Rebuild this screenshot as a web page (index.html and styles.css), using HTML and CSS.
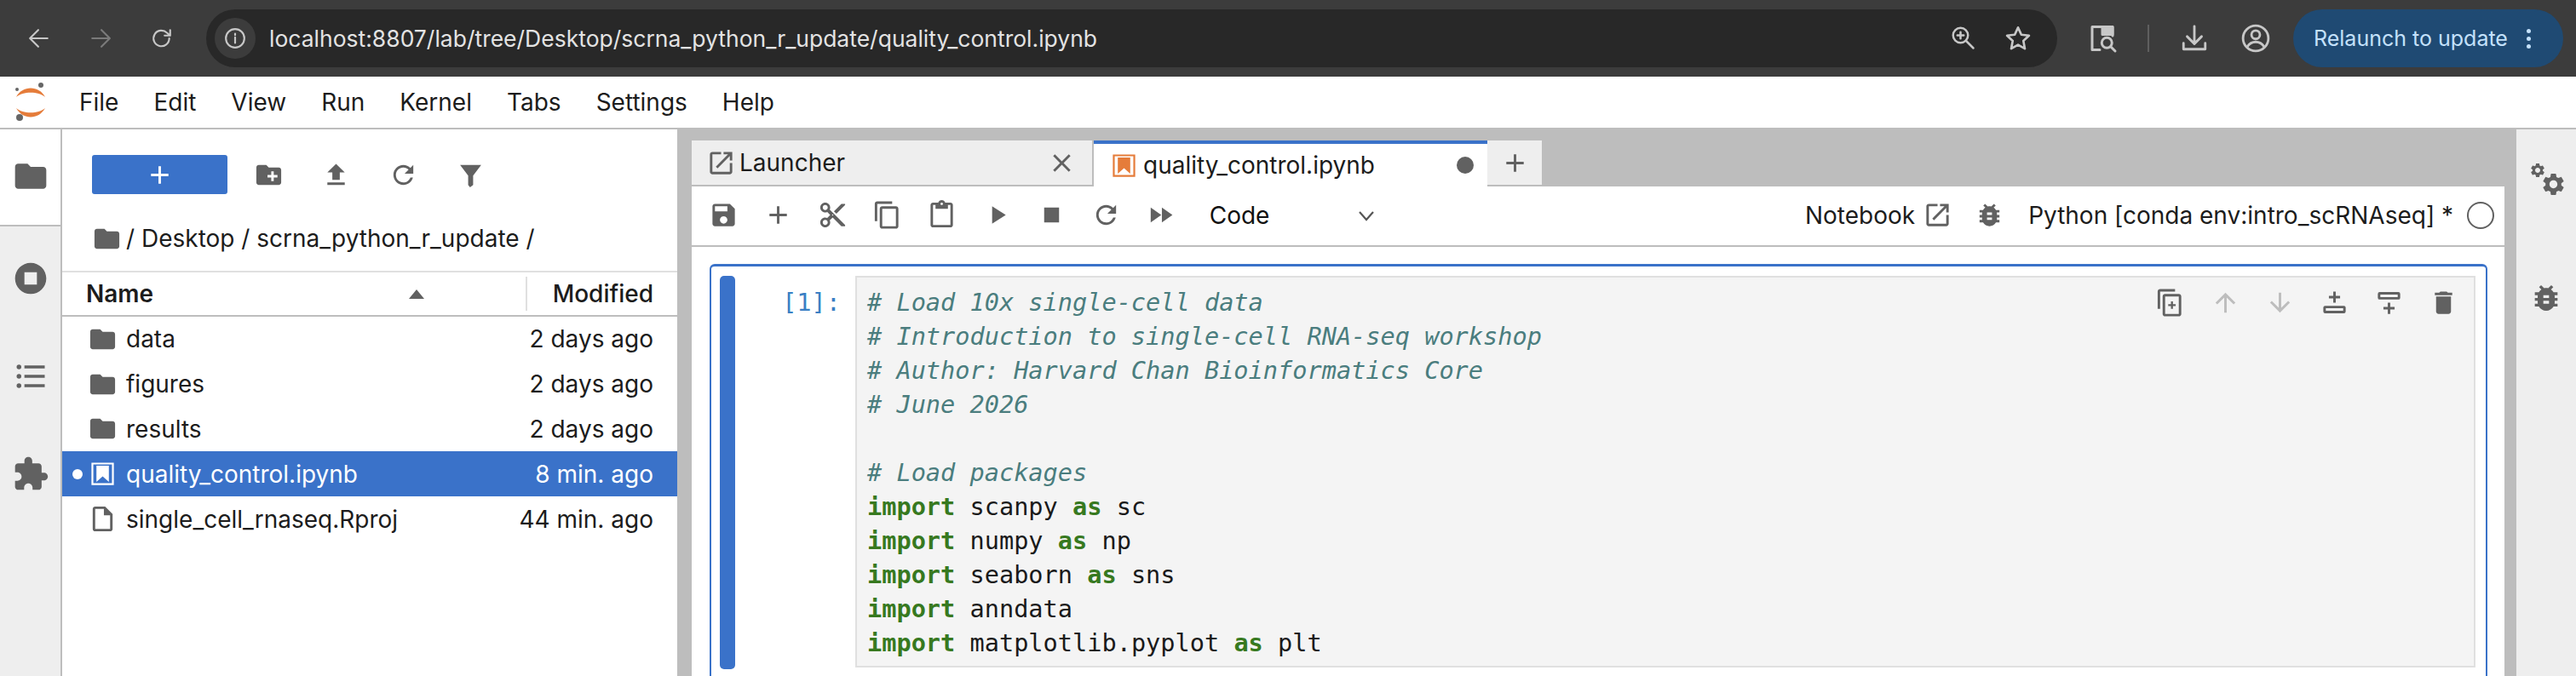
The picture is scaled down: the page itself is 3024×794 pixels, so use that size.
FILE: index.html
```html
<!DOCTYPE html>
<html lang="en">
<head>
<meta charset="utf-8">
<title>quality_control.ipynb - JupyterLab</title>
<link rel="stylesheet" href="styles.css">
</head>
<body>
<svg class="defs" width="0" height="0" aria-hidden="true">
  <symbol id="i-folder" viewBox="0 0 24 24"><path d="M10 4H4c-1.1 0-1.99.9-1.99 2L2 18c0 1.1.9 2 2 2h16c1.1 0 2-.9 2-2V8c0-1.1-.9-2-2-2h-8l-2-2z"/></symbol>
  <symbol id="i-newfolder" viewBox="0 0 24 24"><path d="M20 6h-8l-2-2H4c-1.11 0-1.99.89-1.99 2L2 18c0 1.11.89 2 2 2h16c1.11 0 2-.89 2-2V8c0-1.11-.89-2-2-2zm-1 8h-3v3h-2v-3h-3v-2h3V9h2v3h3v2z"/></symbol>
  <symbol id="i-upload" viewBox="0 0 24 24"><path d="M9 16h6v-6h4l-7-7-7 7h4v6zm-4 2h14v2H5v-2z"/></symbol>
  <symbol id="i-refresh" viewBox="0 0 24 24"><path d="M17.65 6.35C16.2 4.9 14.21 4 12 4c-4.42 0-7.99 3.58-7.99 8s3.57 8 7.99 8c3.73 0 6.84-2.55 7.73-6h-2.08c-.82 2.33-3.04 4-5.65 4-3.31 0-6-2.69-6-6s2.69-6 6-6c1.66 0 3.14.69 4.22 1.78L13 11h7V4l-2.35 2.35z"/></symbol>
  <symbol id="i-filter" viewBox="0 0 24 24"><path d="M3.5 4h17L14 12.5V20l-2.5 2-1.5-2v-7.5z"/></symbol>
  <symbol id="i-stopc" viewBox="0 0 24 24"><path d="M12 2C6.48 2 2 6.48 2 12s4.48 10 10 10 10-4.48 10-10S17.52 2 12 2zm4 14H8V8h8v8z"/></symbol>
  <symbol id="i-list" viewBox="0 0 24 24"><path d="M8 5h13v2H8zM8 11h13v2H8zM8 17h13v2H8z"/><circle cx="4.5" cy="6" r="1.5"/><circle cx="4.5" cy="12" r="1.5"/><circle cx="4.5" cy="18" r="1.5"/></symbol>
  <symbol id="i-puzzle" viewBox="0 0 24 24"><path d="M20.5 11H19V7c0-1.1-.9-2-2-2h-4V3.5C13 2.12 11.88 1 10.5 1S8 2.12 8 3.5V5H4c-1.1 0-1.99.9-1.99 2v3.8H3.5c1.49 0 2.7 1.21 2.7 2.7s-1.21 2.7-2.7 2.7H2V20c0 1.1.9 2 2 2h3.8v-1.5c0-1.49 1.21-2.7 2.7-2.7 1.49 0 2.7 1.21 2.7 2.7V22H17c1.1 0 2-.9 2-2v-4h1.5c1.38 0 2.5-1.12 2.5-2.5S21.88 11 20.5 11z"/></symbol>
  <symbol id="i-file" viewBox="0 0 24 24"><path d="M14 2H6c-1.1 0-1.99.9-1.99 2L4 20c0 1.1.89 2 1.99 2H18c1.1 0 2-.9 2-2V8l-6-6zM6 20V4h7v5h5v11H6z"/></symbol>
  <symbol id="i-nb" viewBox="0 0 24 24"><path d="M3 3h18v18H3zM4.5 4.5v15h15v-15zM7 5.5h10v13l-5-4.5-5 4.5z" fill-rule="evenodd"/></symbol>
  <symbol id="i-launch" viewBox="0 0 24 24"><path d="M19 19H5V5h7V3H5c-1.11 0-2 .9-2 2v14c0 1.1.89 2 2 2h14c1.1 0 2-.9 2-2v-7h-2v7zM14 3v2h3.59l-9.83 9.83 1.41 1.41L19 6.41V10h2V3h-7z"/></symbol>
  <symbol id="i-close" viewBox="0 0 24 24"><path d="M19 6.41L17.59 5 12 10.59 6.41 5 5 6.41 10.59 12 5 17.59 6.41 19 12 13.41 17.59 19 19 17.59 13.41 12z"/></symbol>
  <symbol id="i-add" viewBox="0 0 24 24"><path d="M19 13h-6v6h-2v-6H5v-2h6V5h2v6h6v2z"/></symbol>
  <symbol id="i-save" viewBox="0 0 24 24"><path d="M17 3H5c-1.11 0-2 .9-2 2v14c0 1.1.89 2 2 2h14c1.1 0 2-.9 2-2V7l-4-4zm-5 16c-1.66 0-3-1.34-3-3s1.34-3 3-3 3 1.34 3 3-1.34 3-3 3zm3-10H5V5h10v4z"/></symbol>
  <symbol id="i-cut" viewBox="0 0 24 24"><path d="M9.64 7.64c.23-.5.36-1.05.36-1.64 0-2.21-1.79-4-4-4S2 3.79 2 6s1.79 4 4 4c.59 0 1.14-.13 1.64-.36L10 12l-2.36 2.36C7.14 14.13 6.59 14 6 14c-2.21 0-4 1.79-4 4s1.79 4 4 4 4-1.79 4-4c0-.59-.13-1.14-.36-1.64L12 14l7 7h3v-1L9.64 7.64zM6 8c-1.1 0-2-.89-2-2s.9-2 2-2 2 .89 2 2-.9 2-2 2zm0 12c-1.1 0-2-.89-2-2s.9-2 2-2 2 .89 2 2-.9 2-2 2zm6-7.5c-.28 0-.5-.22-.5-.5s.22-.5.5-.5.5.22.5.5-.22.5-.5.5zM19 3l-6 6 2 2 7-7V3z"/></symbol>
  <symbol id="i-copy" viewBox="0 0 24 24"><path d="M16 1H4c-1.1 0-2 .9-2 2v14h2V3h12V1zm3 4H8c-1.1 0-2 .9-2 2v14c0 1.1.9 2 2 2h11c1.1 0 2-.9 2-2V7c0-1.1-.9-2-2-2zm0 16H8V7h11v14z"/></symbol>
  <symbol id="i-paste" viewBox="0 0 24 24"><path d="M19 2h-4.18C14.4.84 13.3 0 12 0c-1.3 0-2.4.84-2.82 2H5c-1.1 0-2 .9-2 2v16c0 1.1.9 2 2 2h14c1.1 0 2-.9 2-2V4c0-1.1-.9-2-2-2zm-7 0c.55 0 1 .45 1 1s-.45 1-1 1-1-.45-1-1 .45-1 1-1zm7 18H5V4h2v3h10V4h2v16z"/></symbol>
  <symbol id="i-run" viewBox="0 0 24 24"><path d="M8 5v14l11-7z"/></symbol>
  <symbol id="i-stop" viewBox="0 0 24 24"><path d="M6 6h12v12H6z"/></symbol>
  <symbol id="i-ff" viewBox="0 0 24 24"><path d="M4 18l8.5-6L4 6v12zm9-12v12l8.5-6L13 6z"/></symbol>
  <symbol id="i-bug" viewBox="0 0 24 24"><path d="M20 8h-2.81c-.45-.78-1.07-1.45-1.82-1.96L17 4.41 15.59 3l-2.17 2.17C12.96 5.06 12.49 5 12 5c-.49 0-.96.06-1.41.17L8.41 3 7 4.41l1.62 1.63C7.88 6.55 7.26 7.22 6.81 8H4v2h2.09c-.05.33-.09.66-.09 1v1H4v2h2v1c0 .34.04.67.09 1H4v2h2.81c1.04 1.79 2.97 3 5.19 3s4.15-1.21 5.19-3H20v-2h-2.09c.05-.33.09-.66.09-1v-1h2v-2h-2v-1c0-.34-.04-.67-.09-1H20V8zm-6 8h-4v-2h4v2zm0-4h-4v-2h4v2z"/></symbol>
  <symbol id="i-gear" viewBox="0 0 24 24"><path d="M19.14 12.94c.04-.3.06-.61.06-.94 0-.32-.02-.64-.07-.94l2.03-1.58c.18-.14.23-.41.12-.61l-1.92-3.32c-.12-.22-.37-.29-.59-.22l-2.39.96c-.5-.38-1.03-.7-1.62-.94l-.36-2.54c-.04-.24-.24-.41-.48-.41h-3.84c-.24 0-.43.17-.47.41l-.36 2.54c-.59.24-1.13.57-1.62.94l-2.39-.96c-.22-.08-.47 0-.59.22L2.74 8.87c-.12.21-.08.47.12.61l2.03 1.58c-.05.3-.09.63-.09.94s.02.64.07.94l-2.03 1.58c-.18.14-.23.41-.12.61l1.92 3.32c.12.22.37.29.59.22l2.39-.96c.5.38 1.03.7 1.62.94l.36 2.54c.05.24.24.41.48.41h3.84c.24 0 .44-.17.47-.41l.36-2.54c.59-.24 1.13-.56 1.62-.94l2.39.96c.22.08.47 0 .59-.22l1.92-3.32c.12-.22.07-.47-.12-.61l-2.01-1.58zM12 15.6c-1.98 0-3.6-1.62-3.6-3.6s1.62-3.6 3.6-3.6 3.6 1.62 3.6 3.6-1.62 3.6-3.6 3.6z"/></symbol>
  <symbol id="i-dup" viewBox="0 0 24 24"><path d="M16 1H4c-1.1 0-2 .9-2 2v14h2V3h12V1zm3 4H8c-1.1 0-2 .9-2 2v14c0 1.1.9 2 2 2h11c1.1 0 2-.9 2-2V7c0-1.1-.9-2-2-2zm0 16H8V7h11v14zM12.7 11h1.6v2.2h2.2v1.6h-2.2V17h-1.6v-2.2h-2.2v-1.6h2.2z"/></symbol>
  <symbol id="i-up" viewBox="0 0 24 24"><path d="M4 12l1.41 1.41L11 7.83V20h2V7.83l5.58 5.59L20 12l-8-8-8 8z"/></symbol>
  <symbol id="i-down" viewBox="0 0 24 24"><path d="M20 12l-1.41-1.41L13 16.17V4h-2v12.17l-5.58-5.59L4 12l8 8 8-8z"/></symbol>
  <symbol id="i-above" viewBox="0 0 24 24"><path d="M11 3h2v3.5h3.5v2H13V12h-2V8.500H7.500v-2H11z"/><path fill-rule="evenodd" d="M4.500 14.500h15a1.500 1.500 0 0 1 1.500 1.500v3a1.500 1.500 0 0 1-1.500 1.500h-15A1.500 1.500 0 0 1 3 19v-3a1.500 1.500 0 0 1 1.500-1.500zM5 16.500v2h14v-2z"/></symbol>
  <symbol id="i-below" viewBox="0 0 24 24"><path d="M11 12h2v3.500h3.500v2H13V21h-2v-3.500H7.500v-2H11z"/><path fill-rule="evenodd" d="M4.500 3.500h15A1.500 1.500 0 0 1 21 5v3a1.500 1.500 0 0 1-1.500 1.500h-15A1.500 1.500 0 0 1 3 8V5a1.500 1.500 0 0 1 1.500-1.500zM5 5.500v2h14v-2z"/></symbol>
  <symbol id="i-trash" viewBox="0 0 24 24"><path d="M6 19c0 1.100.9 2 2 2h8c1.100 0 2-.9 2-2V7H6v12zM19 4h-3.500l-1-1h-5l-1 1H5v2h14V4z"/></symbol>
</svg>

<div class="app">
  <header class="chrome">
    <div class="nav">
      <span class="nav-btn"><svg class="stroke" width="26" height="26" viewBox="0 0 24 24"><path d="M21 12H3M11 3l-9 9 9 9"/></svg></span>
      <span class="nav-btn dim"><svg class="stroke" width="26" height="26" viewBox="0 0 24 24"><path d="M3 12h18M13 3l9 9-9 9"/></svg></span>
      <span class="nav-btn"><svg class="stroke" width="26" height="26" viewBox="0 0 24 24"><path d="M20 12a8.500 8.500 0 1 1-2.500-6L21 9M21 3v6h-6"/></svg></span>
    </div>
    <div class="omnibox">
      <span class="site-info"><svg class="stroke" width="26" height="26" viewBox="0 0 24 24"><circle cx="12" cy="12" r="10"/><path d="M12 11v6M12 7v1.500"/></svg></span>
      <span class="url">localhost:8807/lab/tree/Desktop/scrna_python_r_update/quality_control.ipynb</span>
      <div class="omni-actions">
        <span class="omni-btn"><svg class="stroke" width="30" height="30" viewBox="0 0 24 24"><circle cx="10" cy="10" r="7"/><path d="M15 15l7 7M10 7v6M7 10h6"/></svg></span>
        <span class="omni-btn"><svg class="stroke" width="32" height="32" viewBox="0 0 24 24"><path d="M12 2.500l2.900 6.300 6.800.8-5 4.700 1.300 6.800-6-3.400-6 3.400 1.300-6.800-5-4.700 6.800-.8z"/></svg></span>
      </div>
    </div>
    <span class="bar-btn lens"><svg class="stroke" width="36" height="36" viewBox="0 0 24 24"><path d="M10 21H4V3h16v7"/><path d="M12 3h8v6h-8z" fill="#c7c7c7"/><circle cx="15.500" cy="15.500" r="4"/><path d="M18.500 18.500L22 22"/></svg></span>
    <span class="bar-sep"></span>
    <span class="bar-btn dl"><svg class="stroke" width="34" height="34" viewBox="0 0 24 24"><path d="M12 2v14M6 10.500l6 6 6-6M3 16v5h18v-5"/></svg></span>
    <span class="bar-btn profile"><svg class="stroke" width="34" height="34" viewBox="0 0 24 24"><circle cx="12" cy="12" r="10.500"/><circle cx="12" cy="9" r="3.500"/><path d="M5 19c2-3 4.500-4 7-4s5 1 7 4"/></svg></span>
    <div class="relaunch"><span>Relaunch to update</span><i class="kebab"></i></div>
  </header>

  <nav class="menubar">
    <svg class="logo" width="38" height="46" viewBox="0 0 38 46">
      <path fill="#e57c3a" d="M2 17C9 3 29 3 36 17 28 10 10 10 2 17z"/>
      <path fill="#e57c3a" d="M2 30c8 14 26 14 34 0-8 7-26 7-34 0z"/>
      <circle fill="#666" cx="31" cy="3" r="3"/><circle fill="#666" cx="3" cy="8" r="2"/><circle fill="#666" cx="6" cy="41" r="4"/>
    </svg>
    <ul class="menu">
      <li>File</li><li>Edit</li><li>View</li><li>Run</li><li>Kernel</li><li>Tabs</li><li>Settings</li><li>Help</li>
    </ul>
  </nav>

  <main class="workspace">
    <aside class="rail">
      <div class="rail-tab active"><svg class="ic rail-ic"><use href="#i-folder"/></svg></div>
      <div class="rail-tab first"><svg class="ic rail-ic"><use href="#i-stopc"/></svg></div>
      <div class="rail-tab"><svg class="ic rail-ic"><use href="#i-list"/></svg></div>
      <div class="rail-tab"><svg class="ic rail-ic"><use href="#i-puzzle"/></svg></div>
    </aside>

    <section class="files">
      <div class="file-tools">
        <button class="new-btn"><svg class="ic white"><use href="#i-add"/></svg></button>
        <span class="file-tool first"><svg class="ic"><use href="#i-newfolder"/></svg></span>
        <span class="file-tool"><svg class="ic"><use href="#i-upload"/></svg></span>
        <span class="file-tool"><svg class="ic"><use href="#i-refresh"/></svg></span>
        <span class="file-tool"><svg class="ic"><use href="#i-filter"/></svg></span>
      </div>
      <div class="crumbs"><svg class="ic"><use href="#i-folder"/></svg><span>/ Desktop / scrna_python_r_update /</span></div>
      <div class="list-head">
        <span class="col-name">Name</span>
        <i class="sort"></i>
        <span class="col-mod">Modified</span>
      </div>
      <ul class="rows">
        <li class="row"><svg class="ic"><use href="#i-folder"/></svg><span class="fname">data</span><span class="fdate">2 days ago</span></li>
        <li class="row"><svg class="ic"><use href="#i-folder"/></svg><span class="fname">figures</span><span class="fdate">2 days ago</span></li>
        <li class="row"><svg class="ic"><use href="#i-folder"/></svg><span class="fname">results</span><span class="fdate">2 days ago</span></li>
        <li class="row selected"><i class="running"></i><svg class="ic white"><use href="#i-nb"/></svg><span class="fname">quality_control.ipynb</span><span class="fdate">8 min. ago</span></li>
        <li class="row"><svg class="ic"><use href="#i-file"/></svg><span class="fname">single_cell_rnaseq.Rproj</span><span class="fdate">44 min. ago</span></li>
      </ul>
    </section>

    <section class="main">
      <div class="tabbar">
        <div class="tab launcher"><svg class="ic"><use href="#i-launch"/></svg><span class="tab-label">Launcher</span><svg class="ic tab-close"><use href="#i-close"/></svg></div>
        <div class="tab current"><svg class="ic orange"><use href="#i-nb"/></svg><span class="tab-label">quality_control.ipynb</span><i class="dirty"></i></div>
        <div class="tab-add"><svg class="ic"><use href="#i-add"/></svg></div>
      </div>
      <div class="nb-toolbar">
        <span class="tb"><svg class="ic"><use href="#i-save"/></svg></span>
        <span class="tb"><svg class="ic"><use href="#i-add"/></svg></span>
        <span class="tb"><svg class="ic"><use href="#i-cut"/></svg></span>
        <span class="tb"><svg class="ic"><use href="#i-copy"/></svg></span>
        <span class="tb"><svg class="ic"><use href="#i-paste"/></svg></span>
        <span class="tb"><svg class="ic"><use href="#i-run"/></svg></span>
        <span class="tb"><svg class="ic"><use href="#i-stop"/></svg></span>
        <span class="tb"><svg class="ic"><use href="#i-refresh"/></svg></span>
        <span class="tb"><svg class="ic"><use href="#i-ff"/></svg></span>
        <div class="celltype"><span>Code</span><svg class="stroke-dark" width="24" height="24" viewBox="0 0 24 24"><path d="M4 8l8 9 8-9"/></svg></div>
        <div class="nb-right">
          <span class="nb-open">Notebook</span>
          <svg class="ic launch-ic"><use href="#i-launch"/></svg>
          <svg class="ic bug-ic"><use href="#i-bug"/></svg>
          <span class="kernel">Python [conda env:intro_scRNAseq] *</span>
          <i class="status"></i>
        </div>
      </div>
      <div class="notebook">
        <div class="cell">
          <div class="collapser"></div>
          <div class="prompt">[1]:</div>
          <div class="editor">
<pre class="code"><span class="c"># Load 10x single-cell data</span>
<span class="c"># Introduction to single-cell RNA-seq workshop</span>
<span class="c"># Author: Harvard Chan Bioinformatics Core</span>
<span class="c"># June 2026</span>

<span class="c"># Load packages</span>
<span class="k">import</span> scanpy <span class="k">as</span> sc
<span class="k">import</span> numpy <span class="k">as</span> np
<span class="k">import</span> seaborn <span class="k">as</span> sns
<span class="k">import</span> anndata
<span class="k">import</span> matplotlib.pyplot <span class="k">as</span> plt</pre>
            <div class="cell-tools">
              <span class="ct"><svg class="ic"><use href="#i-dup"/></svg></span>
              <span class="ct off"><svg class="ic"><use href="#i-up"/></svg></span>
              <span class="ct off"><svg class="ic"><use href="#i-down"/></svg></span>
              <span class="ct"><svg class="ic"><use href="#i-above"/></svg></span>
              <span class="ct"><svg class="ic"><use href="#i-below"/></svg></span>
              <span class="ct"><svg class="ic"><use href="#i-trash"/></svg></span>
            </div>
          </div>
        </div>
      </div>
    </section>

    <aside class="right-rail">
      <div class="gears">
        <svg class="ic gear-small"><use href="#i-gear"/></svg>
        <svg class="ic gear-big"><use href="#i-gear"/></svg>
      </div>
      <svg class="ic right-bug"><use href="#i-bug"/></svg>
    </aside>
  </main>
</div>
</body>
</html>
```

FILE: styles.css
```css
* { box-sizing: border-box; }
html, body { margin: 0; padding: 0; }
body {
  width: 3024px;
  height: 794px;
  overflow: hidden;
  background: #fff;
  color: #1c1c1c;
  font-family: Inter, "Liberation Sans", sans-serif;
  font-size: 28px;
}
ul { list-style: none; margin: 0; padding: 0; }
i { display: block; font-style: normal; }
.defs { display: block; height: 0; }
.app { display: flex; flex-direction: column; height: 794px; overflow: hidden; }

.ic { width: 35px; height: 35px; fill: #616161; flex: none; display: block; }
.ic.white { fill: #fff; }
.ic.orange { fill: #e57c3a; }
.stroke { fill: none; stroke: #c7c7c7; stroke-width: 2; stroke-linecap: round; stroke-linejoin: round; display: block; }
.stroke-dark { fill: none; stroke: #555; stroke-width: 2.200; display: block; }

/* browser chrome */
.chrome {
  height: 90px; flex: none; display: flex; align-items: center;
  background: #3c3c3c; color: #e3e3e3;
}
.nav { display: flex; padding-left: 10px; }
.nav-btn { width: 72px; display: flex; justify-content: center; }
.nav-btn.dim { opacity: .45; }
.omnibox {
  width: 2173px; height: 68px; margin-left: 16px; padding-left: 10px;
  display: flex; align-items: center; border-radius: 34px; background: #282828;
}
.site-info {
  width: 48px; height: 48px; border-radius: 50%; background: #3c3c3c;
  display: flex; align-items: center; justify-content: center;
}
.url { margin-left: 16px; font-size: 26.500px; color: #e3e3e3; white-space: nowrap; }
.omni-actions { margin-left: auto; display: flex; padding-right: 14px; }
.omni-btn { width: 65px; display: flex; justify-content: center; }
.bar-btn { width: 56px; display: flex; justify-content: center; }
.lens { margin-left: 25px; }
.bar-sep { width: 2px; height: 32px; margin-left: 25px; background: #5f5f5f; }
.dl { margin-left: 25px; }
.profile { margin-left: 16px; }
.relaunch {
  width: 317px; height: 68px; margin-left: 16px; padding-left: 24px;
  display: flex; align-items: center; border-radius: 34px;
  background: #1f4a73; color: #c4e1fb; font-size: 25px; white-space: nowrap;
}
.kebab {
  width: 5px; height: 5px; margin-left: 22px; border-radius: 50%;
  background: #c4e1fb; box-shadow: 0 -9px 0 #c4e1fb, 0 9px 0 #c4e1fb;
}

/* menu */
.menubar {
  height: 62px; flex: none; display: flex; align-items: center;
  padding-left: 17px; background: #fff; border-bottom: 2px solid #bdbdbd;
}
.logo { display: block; flex: none; }
.menu { display: flex; margin-left: 38px; gap: 41px; font-size: 28px; }

/* workspace */
.workspace { flex: 1; min-height: 0; display: flex; background: #bdbdbd; overflow: hidden; }
.rail { width: 73px; flex: none; background: #eee; border-right: 2px solid #bdbdbd; }
.rail-tab { height: 115px; display: flex; align-items: center; justify-content: center; }
.rail-tab.active { height: 114px; padding-bottom: 2px; background: #fff; border-bottom: 2px solid #bdbdbd; }
.rail-tab.first { margin-top: 3px; }
.rail-ic { width: 44px; height: 44px; }

/* file browser */
.files { width: 722px; flex: none; background: #fff; display: flex; flex-direction: column; }
.file-tools { height: 106px; flex: none; padding: 30px 0 0 35px; display: flex; align-items: flex-start; }
.new-btn {
  width: 159px; height: 46px; border: 0; border-radius: 3px; padding: 0;
  background: #3a72c9; display: flex; align-items: center; justify-content: center;
}
.file-tool { width: 79px; height: 46px; display: flex; align-items: center; justify-content: center; }
.file-tool.first { margin-left: 9px; }
.crumbs { height: 44px; flex: none; padding-left: 105px; display: flex; align-items: center; gap: 5px; margin-left: -70px; }
.list-head {
  height: 54px; flex: none; margin-top: 16px; display: flex; align-items: center;
  border-top: 2px solid #e0e0e0; border-bottom: 2px solid #bdbdbd;
  padding: 0 28px 0 28px; font-weight: 600;
}
.col-name { flex: none; }
.sort {
  width: 0; height: 0; margin-left: 300px;
  border-left: 9px solid transparent; border-right: 9px solid transparent; border-bottom: 11px solid #616161;
}
.col-mod { margin-left: auto; font-weight: 500; padding-left: 30px; border-left: 2px solid #e0e0e0; line-height: 40px; }
.row { height: 52.800px; display: flex; align-items: center; padding: 0 28px 0 30px; position: relative; }
.row .fname { margin-left: 10px; white-space: nowrap; }
.row .fdate { margin-left: auto; white-space: nowrap; }
.row.selected { background: #3a72c9; color: #fff; }
.running {
  position: absolute; left: 12px; top: 21px; width: 12px; height: 12px;
  border-radius: 50%; background: #fff;
}

/* main area */
.main { width: 2128px; flex: none; margin-left: 17px; display: flex; flex-direction: column; }
.tabbar { height: 67px; flex: none; padding-top: 13px; display: flex; align-items: stretch; }
.tab { display: flex; align-items: center; white-space: nowrap; }
.launcher {
  width: 472px; padding-left: 17px; background: #eee;
  border-right: 2px solid #bdbdbd; border-bottom: 2px solid #bdbdbd;
}
.launcher .tab-label { margin-left: 4px; }
.tab-close { margin-left: auto; margin-right: 18px; }
.current {
  width: 462px; padding-left: 18px; background: #fff; border-top: 4px solid #3a72c9;
}
.current .tab-label { margin-left: 5px; }
.dirty { width: 20px; height: 20px; margin-left: auto; margin-right: 16px; border-radius: 50%; background: #616161; }
.tab-add { width: 64px; background: #eee; margin-bottom: 2px; display: flex; align-items: center; justify-content: center; }

.nb-toolbar {
  height: 71px; flex: none; display: flex; align-items: center; padding: 0 0 2px 5px;
  background: #fff; border-bottom: 2px solid #bdbdbd;
}
.tb { width: 64.200px; display: flex; justify-content: center; }
.celltype { width: 196px; margin-left: 25px; display: flex; align-items: center; justify-content: space-between; color: #111; }
.nb-right { margin-left: auto; padding-right: 12px; display: flex; align-items: center; }
.launch-ic { margin-left: 9px; }
.bug-ic { margin-left: 26px; }
.kernel { margin-left: 28px; white-space: nowrap; }
.status { width: 32px; height: 32px; margin-left: 16px; border: 2.500px solid #616161; border-radius: 50%; }

/* notebook */
.notebook { flex: 1; min-height: 0; background: #fff; padding: 20px 20px 0 21px; overflow: hidden; }
.cell {
  display: flex; height: 520px; padding: 11px 12px 0 10px;
  border: 2px solid #3a72c9; border-top-width: 3px; border-right-width: 2px; border-bottom: 0; border-left-width: 2px; border-radius: 6px 6px 0 0;
}
.collapser { width: 18px; height: 462px; flex: none; background: #3a72c9; border-radius: 5px; }
.prompt {
  width: 141px; flex: none; padding: 11px 17px 0 0; text-align: right;
  font-family: "DejaVu Sans Mono", monospace; font-size: 28.600px; line-height: 40px; color: #3a7fc4;
}
.editor {
  position: relative; flex: 1; height: 460px; padding: 9px 12px 0;
  background: #f4f4f4; border: 2px solid #e0e0e0;
}
.code {
  margin: 0; font-family: "DejaVu Sans Mono", monospace; font-size: 28.600px; line-height: 40px; color: #1a1a1a;
}
.c { color: #4a7d7e; font-style: italic; }
.k { color: #37791f; font-weight: 700; }
.cell-tools { position: absolute; top: 9px; right: 3px; display: flex; }
.ct { width: 64.200px; height: 40px; display: flex; align-items: center; justify-content: center; }
.ct.off .ic { fill: #bdbdbd; }

/* right rail */
.right-rail { width: 70px; flex: none; margin-left: 14px; background: #eee; display: flex; flex-direction: column; align-items: center; }
.gears { position: relative; width: 40px; height: 42px; margin-top: 38px; }
.gear-small { position: absolute; left: 0; top: 0; width: 20px; height: 20px; }
.gear-big { position: absolute; left: 13px; top: 11px; width: 31px; height: 31px; }
.right-bug { margin-top: 98px; width: 40px; height: 40px; }
```
